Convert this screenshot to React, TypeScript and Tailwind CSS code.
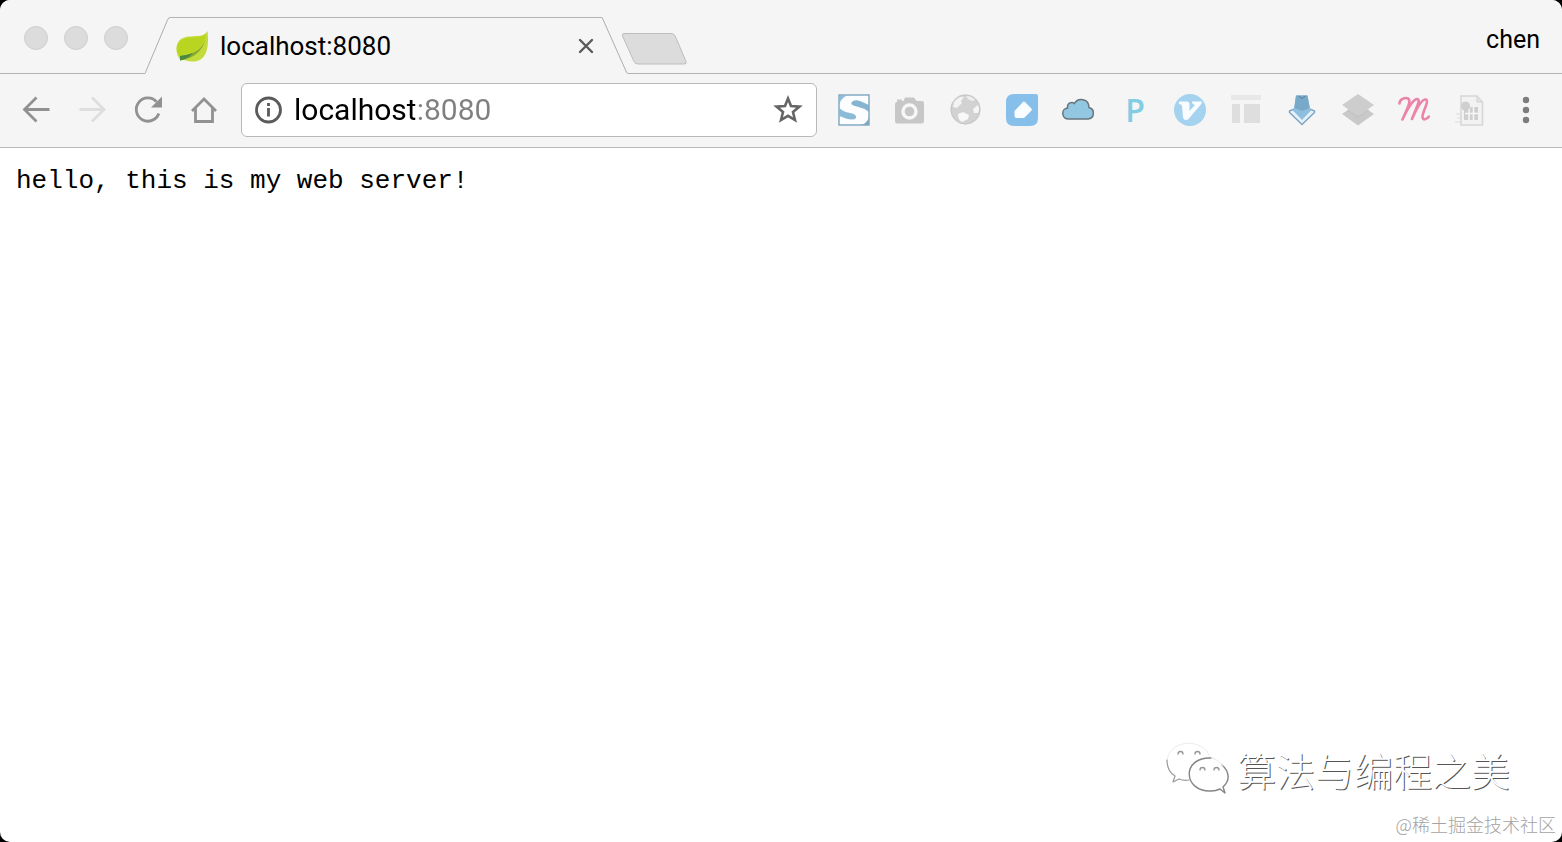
import type { ReactNode } from 'react'

export default function App() {
    return (
        <div className="min-h-screen bg-black font-['Roboto',sans-serif]">
            <div className="flex min-h-screen flex-col overflow-hidden rounded-[10px] bg-white">
                <TabStrip />
                <Toolbar />

                {/* PAGE */}
                <main className="flex flex-1 flex-col">
                    <pre className="px-4 pt-[17px] font-['Liberation_Mono',monospace] text-[26px] leading-8 text-black">hello, this is my web server!</pre>
                    <Watermark />
                </main>
            </div>
        </div>
    )
}

function TabStrip() {
    return (
        <header className="flex h-[74px] items-end bg-[#f5f5f5]">
            <div className="flex h-full w-[145px] items-start gap-4 border-b border-[#b3b3b3] pt-[26px] pl-6">
                <WindowButton label="Close window" />
                <WindowButton label="Minimize window" />
                <WindowButton label="Zoom window" />
            </div>

            {/* ACTIVE TAB */}
            <div className="flex h-[57px]">
                <svg className="h-[57px] w-[25px]" viewBox="0 0 25 57" fill="none" stroke="#adadad">
                    <path d="M0 56.5 L22.5 3 Q23.5 .5 25 .5" />
                </svg>
                <div className="flex w-[432px] items-center gap-3 border-t border-[#b3b3b3] pr-2 pl-[6px]">
                    <LeafIcon />
                    <span className="flex-1 text-[26px] leading-8 text-black">localhost:8080</span>
                    <button aria-label="Close tab" className="flex h-4 w-4">
                        <svg className="h-4 w-4" viewBox="0 0 16 16" stroke="#5a5a5a" strokeWidth="2.4" strokeLinecap="round">
                            <path d="M2 2 L14 14 M14 2 L2 14" />
                        </svg>
                    </button>
                </div>
                <svg className="h-[57px] w-[26px]" viewBox="0 0 26 57" fill="none" stroke="#adadad">
                    <path d="M0 .5 L1 2.5 L23.5 53 Q24.5 56.5 26 56.5" />
                </svg>
            </div>

            <div className="flex h-full flex-1 items-start justify-between border-b border-[#b3b3b3] pr-[22px]">
                <button aria-label="New tab" className="-ml-2 mt-8">
                    <svg className="h-[33px] w-[68px]" viewBox="0 0 68 33" fill="#dcdcdc" stroke="#bdbdbd">
                        <path d="M4 1.5 H51 Q54 1.5 55.2 4 L66 29.5 Q67 32 64 32 H18 Q15 32 14 29.5 L2.5 4 Q1.5 1.5 4 1.5 Z" />
                    </svg>
                </button>
                <button className="mt-6 text-[25px] leading-8 text-black">chen</button>
            </div>
        </header>
    )
}

function WindowButton({ label }: { label: string }) {
    return <button aria-label={label} className="h-6 w-6 rounded-full border border-[#cfcfcf] bg-[#dcdcdc]" />
}

function Toolbar() {
    return (
        <div className="flex h-[74px] items-center border-b border-[#b8b8b8] bg-[#f5f5f5] px-2 pb-[2px]">
            <ToolButton label="Back">
                <g fill="none" stroke="#919191" strokeWidth="2.8">
                    <path d="M29.5 15.5 H4.5 M16.5 3.5 L4.5 15.5 L16.5 27.5" />
                </g>
            </ToolButton>
            <ToolButton label="Forward">
                <g fill="none" stroke="#dedede" strokeWidth="2.8">
                    <path d="M3.5 15.5 H28 M16 3.5 L28 15.5 L16 27.5" />
                </g>
            </ToolButton>
            <ToolButton label="Reload">
                <path d="M26.8 19.5 A11.6 11.6 0 1 1 24.5 7.8" fill="none" stroke="#919191" strokeWidth="2.8" />
                <path d="M30 2.5 V13.5 H19 Z" fill="#919191" />
            </ToolButton>
            <ToolButton label="Home">
                <g fill="none" stroke="#919191" strokeWidth="2.8">
                    <path d="M4 17 L16 5 L28 17" />
                    <path d="M7.5 14 V27.5 H24.5 V14" />
                </g>
            </ToolButton>

            {/* ADDRESS BAR */}
            <div className="mx-[9px] flex h-[54px] flex-1 items-center rounded-md border border-[#b8b8b8] bg-white px-3">
                <button aria-label="Site information">
                    <svg className="h-[30px] w-[30px]" viewBox="0 0 30 30" fill="none" stroke="#5a5a5a" strokeWidth="2.8">
                        <circle cx="14.5" cy="15" r="12" />
                        <path d="M14.5 13 V21.5 M14.5 8 V11" />
                    </svg>
                </button>
                <input
                    type="text"
                    aria-label="Address"
                    defaultValue="localhost:8080"
                    className="ml-[10px] h-10 min-w-0 flex-1 bg-[linear-gradient(to_right,#000_121px,#808080_121px)] bg-clip-text text-[30px] leading-10 text-transparent outline-none"
                />
                <button aria-label="Bookmark this page">
                    <svg className="h-8 w-8" viewBox="0 0 32 32" fill="none" stroke="#666" strokeWidth="2.6">
                        <path d="M16 4.5 L19 12 L27.5 12.6 L21 18 L23 26 L16 21.8 L9 26 L11 18 L4.5 12.6 L13 12 Z" />
                    </svg>
                </button>
            </div>

            <Extensions />
        </div>
    )
}

function ToolButton({ label, children }: { label: string; children: ReactNode }) {
    return (
        <button aria-label={label} className="flex h-10 w-14 shrink-0 items-center justify-center">
            <svg className="h-8 w-8" viewBox="0 0 32 32">
                {children}
            </svg>
        </button>
    )
}

function Extensions() {
    return (
        <>
            <ToolButton label="Stylish">
                <rect x="1" y="1" width="30" height="30" fill="#fbfdfe" />
                <path d="M1.5 1.5 H9 Q3 4 1.5 10 Z" fill="#8fbdd9" />
                <path d="M1.5 14 Q5 18 12 19 Q19 20 18 24 Q15 28 1.5 22 Z" fill="#8cbbd8" />
                <path d="M13.5 8.5 Q16 5 22 7 L31 11 V18 Q26 14 19 12.5 Q12 11 13.5 8.5 Z" fill="#84b4d0" />
                <path d="M31 23 V31 H22 Q29 30 31 23 Z" fill="#7fa6bc" />
                <rect x="1" y="1" width="30" height="30" fill="none" stroke="#83abc1" strokeWidth="1.5" />
            </ToolButton>
            <ToolButton label="Screenshot">
                <path d="M1 10 Q1 8 3 8 V5.5 H8 V7 L9.5 7 L11 3.5 H20 L22.5 7 H28 Q30 7 30 9 V27 Q30 29.5 28 29.5 H3.5 Q1 29.5 1 27 Z" fill="#c7c7c7" />
                <circle cx="15.5" cy="17.5" r="6.5" fill="#c7c7c7" stroke="#f7f7f7" strokeWidth="3.4" />
            </ToolButton>
            <ToolButton label="Globe">
                <circle cx="15.5" cy="15.5" r="15" fill="#d2d2d2" />
                <circle cx="15.5" cy="15.5" r="14.5" fill="none" stroke="#c6c6c6" />
                <path d="M4 8 Q9 2 14 3 L11 7 L12 9 L7 14 L3 13 Z" fill="#f3f3f3" />
                <path d="M16 2 Q22 2 25 6 L22 7 L18 5 Z" fill="#efefef" />
                <path d="M23 15 L28 11 Q30 15 28 19 L24 19 Z" fill="#f6f6f6" />
                <path d="M8 20 L13 18 L19 21 L18 25 L12 28 Q8 26 8 20 Z" fill="#f8f8f8" />
            </ToolButton>
            <ToolButton label="Notes">
                <path d="M8 0 H30 Q32 0 32 2 V24 Q32 32 24 32 H8 Q0 32 0 24 V8 Q0 0 8 0 Z" fill="#87bfeb" />
                <path d="M19 8 L25.5 14.5 Q26 15.5 25.5 16.5 L18 24 H11 Q8.5 24 8.5 21.5 V17 L16.5 8.5 Q17.5 7 19 8 Z" fill="#fafdff" />
            </ToolButton>
            <ToolButton label="Cloud">
                <path
                    d="M7 25 C-1 25 -1 14.5 5.5 14 C5 8.5 10 7.5 12.500 9.500 C16 3 27 4.500 27 13.500 C33 15 33 24.500 26 25 Z"
                    fill="#92c7e1"
                    stroke="#67747c"
                    strokeWidth="1.5"
                />
            </ToolButton>
            <button
                aria-label="P"
                className="h-10 w-14 shrink-0 pl-[2px] text-center font-['Open_Sans',sans-serif] text-[32px] leading-10 font-semibold text-[#82cce4]"
            >
                P
            </button>
            <ToolButton label="Vimium">
                <circle cx="16" cy="16" r="16" fill="#a5d2ee" />
                <path d="M5 7.5 H13 Q15.5 7.5 15.5 10 V17 L21 11 Q17.5 9.5 18 7.5 H27.5 Q28.5 8.5 26.5 11 L14 25.5 Q9.5 27 9 23 L8 12 Q7.500 10 5 10 Z" fill="#fafdff" />
            </ToolButton>
            <ToolButton label="Layout">
                <path d="M1 1 H31 V6 H1 Z" fill="#e8e8e8" />
                <path d="M2 10 H10 V29 H2 Z M14 10 H30 V29 H14 Z" fill="#dedede" />
            </ToolButton>
            <ToolButton label="Download">
                <path d="M3.500 17 L8 15 L16 23 L24 15 L28.500 17 V18.500 L16 30.500 L3.500 18.500 Z" fill="#e4f1fa" stroke="#7da2c2" strokeWidth="1.4" />
                <path d="M10 1.500 H21.500 L24 15.500 H26 L16 26 L6 15.500 H8 Z" fill="#8fbede" />
                <path d="M10 1.500 H21.500 L23.800 14 L16 17 L8.300 14 Z" fill="#79a9c8" />
                <path d="M12.500 2 L16 4.500 L19.500 2" fill="none" stroke="#54809c" />
            </ToolButton>
            <ToolButton label="Layers">
                <path d="M16 9 L32 20 L16 31.500 L0 20 Z" fill="#c9c9c9" />
                <path d="M16 0 L32 11 L16 22 L0 11 Z" fill="#cdcdcd" />
                <path d="M5 16 L16 23.500 L27 16" fill="none" stroke="#c2c2c2" />
            </ToolButton>
            <ToolButton label="Momentum">
                <path
                    d="M1.500 9.500 C1.500 5.500 7 3 10 4.500 C13.500 6.500 10 13 4.500 25.500 C10 13.500 16 4.500 19.500 5 C23 6 18 14 14 25 C19 13.500 24.500 4.500 28 5.500 C31.500 7 24.500 18 24.500 22.500 C24.500 27 29 25.500 31 22.500"
                    fill="none"
                    stroke="#ec83a8"
                    strokeWidth="2.6"
                    strokeLinecap="round"
                    strokeLinejoin="round"
                />
            </ToolButton>
            <ToolButton label="Document">
                <path d="M7 2 H23 L28.500 8 V31 H7 Z" fill="#f2f2f2" stroke="#d6d6d6" strokeWidth="1.5" />
                <path d="M23 2 V8 H28.500" fill="#e2e2e2" stroke="#d0d0d0" />
                <path d="M10 13 H24 V26 H10 Z" fill="#cfcfcf" />
                <path d="M11 19.500 H24 M15 13 V26 M19.500 13 V26" stroke="#f7f7f7" strokeWidth="1.5" />
                <circle cx="11.500" cy="12" r="4.5" fill="#cfcfcf" />
                <path d="M2 20 H8 M3 24 H8 M1 28 H8" stroke="#dcdcdc" strokeWidth="1.2" />
            </ToolButton>
            <ToolButton label="Menu">
                <g fill="#7d7d7d">
                    <circle cx="16" cy="6" r="3.2" />
                    <circle cx="16" cy="16" r="3.2" />
                    <circle cx="16" cy="26" r="3.2" />
                </g>
            </ToolButton>
        </>
    )
}

function LeafIcon() {
    return (
        <svg className="h-8 w-8" viewBox="0 0 32 32">
            <path d="M31.500 1 C33 15 32 31 17 31.500 C11 31.500 8 29 4 29.500 C-1 23 -1 12 6 8.500 C14 4 27 9 31.500 1 Z" fill="#c3db3c" />
            <path d="M30 4 C29 13 24 20 14 23 C9 24.500 6 25 3.500 26.500 C-1 21 0 13 7 9.500 C14 5.500 25 10 30 4 Z" fill="#b9d51f" />
            <path d="M29.500 10 C25 20 18 24 4 26 L4 30.500 C16 29 26 22 29.500 10 Z" fill="#85a92a" />
            <path d="M4 26 Q12 25 17 23 L13 27 Q8 29.500 4 30.500 Z" fill="#4c8740" />
        </svg>
    )
}

// White artwork that shows through its thin shadow only
function Watermark() {
    return (
        <footer className="mt-auto flex flex-col items-end">
            <div className="flex items-center gap-2 pr-[52px]">
                <svg className="h-[54px] w-16" viewBox="0 0 64 54" fill="none" strokeLinecap="round" strokeLinejoin="round">
                    <path d="M2 20 C2 -3 39 -5 45 15" stroke="#ececec" />
                    <path d="M2 18 C2 26 5 31 10 34 L8 40 L14 37 Q19 39 24 38" stroke="#9a9a9a" strokeWidth="1.2" />
                    <path d="M46 16 C16 15 18 50 46 49 Q51 49 55 47 L60 51 L58 45 C65 39 65 30 57 23" stroke="#858585" strokeWidth="1.4" />
                    <path d="M47 16 Q54 18 58 24" stroke="#e8e8e8" />
                    <path d="M13 12 A2.5 2.5 0 1 1 18 12 M30 12 A2.5 2.5 0 1 1 35 12 M35 28 A2.5 2.5 0 1 1 40 28 M49 28 A2.5 2.5 0 1 1 54 28" stroke="#959595" strokeWidth="1.3" />
                </svg>
                <p className="font-['Noto_Sans_CJK_SC',sans-serif] text-[39px] leading-[54px] font-light text-white [text-shadow:1px_1px_0_#555]">
                    算法与编程之美
                </p>
            </div>
            <p className="pt-4 pr-[6px] pb-[6px] font-['Noto_Sans_CJK_SC',sans-serif] text-[18px] leading-6 font-light text-[#a3a3a3]">
                @稀土掘金技术社区
            </p>
        </footer>
    )
}
